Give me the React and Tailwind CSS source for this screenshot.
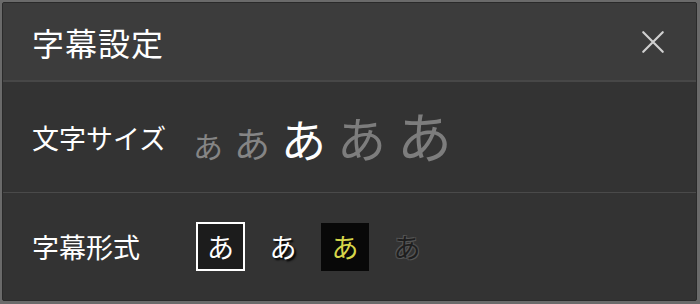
import React from 'react';

const FONT = { fontFamily: '"Noto Sans CJK JP", "Noto Sans", sans-serif' };

const SIZES = [
  { cls: 'text-[30px] text-[#858585]' },
  { cls: 'text-[36px] text-[#858585]' },
  { cls: 'text-[45px] text-white' },
  { cls: 'text-[49px] text-[#7d7d7d]' },
  { cls: 'text-[55px] text-[#7d7d7d]' },
];

export default function App() {
  return (
    <div className="w-[700px] h-[304px] bg-[#6a6a6a] p-[2px] pr-[3px] pb-[3px]" style={FONT}>
      <div className="h-full flex flex-col bg-[#333333] border border-[#2a2a2a] rounded-[2px] overflow-hidden">
        {/* header */}
        <div className="h-[79px] flex items-center justify-between pl-[29px] pr-[30px] bg-[#3c3c3c] border-b-2 border-[#474747]">
          <h1 className="text-[32px] text-white leading-none tracking-[1px]">字幕設定</h1>
          <svg width="26" height="26" viewBox="0 0 24 24" fill="none" stroke="#d0d0d0" strokeWidth="2" strokeLinecap="round">
            <path d="M3 3L21 21M21 3L3 21" />
          </svg>
        </div>

        {/* size row */}
        <div className="h-[111px] flex items-center pl-[29px] border-b border-[#4a4a4a]">
          <span className="w-[161px] text-[27px] text-white leading-none">文字サイズ</span>
          <div className="flex items-baseline gap-[11px] leading-none mt-[-6px]">
            {SIZES.map((s, i) => (
              <span key={i} className={s.cls}>あ</span>
            ))}
          </div>
        </div>

        {/* format row */}
        <div className="flex-1 flex items-center pl-[29px]">
          <span className="w-[164px] text-[27px] text-white leading-none">字幕形式</span>
          <div className="flex items-center gap-[14px] text-[27px] leading-none">
            <div className="w-[49px] h-[49px] flex items-center justify-center bg-[#1c1c1c] border-2 border-white text-white">あ</div>
            <div className="w-[48px] h-[48px] flex items-center justify-center text-white [text-shadow:2px_2px_2px_#000]">あ</div>
            <div className="w-[48px] h-[48px] flex items-center justify-center bg-[#080808] text-[#d6d64a]">あ</div>
            <div className="w-[48px] h-[48px] flex items-center justify-center text-[#1e1e1e] [text-shadow:1px_1px_0_#555,-1px_-1px_0_#555,1px_-1px_0_#4a4a4a,-1px_1px_0_#4a4a4a]">あ</div>
          </div>
        </div>
      </div>
    </div>
  );
}
